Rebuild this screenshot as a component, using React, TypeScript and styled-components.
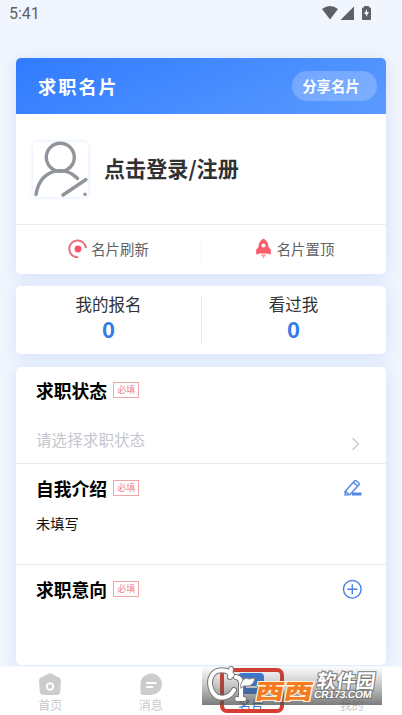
import React from "react";
import styled, { createGlobalStyle } from "styled-components";

const GlobalStyle = createGlobalStyle`
  * { box-sizing: border-box; }
  html, body { margin: 0; padding: 0; overflow: hidden; }
  body { font-family: "Noto Sans CJK SC", sans-serif; background: #f1f5fd; }
  svg { display: block; flex: none; overflow: visible; }
`;

const Screen = styled.div`
  position: relative;
  width: 402px;
  height: 715px;
  overflow: hidden;
  display: flex;
  flex-direction: column;
  background: #f1f5fd;
`;

const StatusBar = styled.header`
  height: 58px;
  flex: none;
  padding: 5px 30px 0 9px;
  display: flex;
  justify-content: space-between;
  color: #5f6064;
  font: 400 16px/18px Roboto, sans-serif;
`;

const Content = styled.main`
  height: 608px;
  flex: none;
  padding: 0 16px;
  display: flex;
  flex-direction: column;
`;

const Card = styled.section<{ $height: number; $gap: number }>`
  height: ${(p) => p.$height}px;
  margin-bottom: ${(p) => p.$gap}px;
  flex: none;
  background: #fff;
  border-radius: 5px;
  box-shadow: 0 2px 16px rgba(65, 130, 250, 0.17);
`;

const CardHeader = styled.div`
  height: 56px;
  padding: 0 9px 0 22px;
  display: flex;
  align-items: center;
  justify-content: space-between;
  border-radius: 5px 5px 0 0;
  background: linear-gradient(155deg, #307bff, #5b9bff);
  color: #fff;
`;

const HeaderTitle = styled.h1`
  margin: 0;
  font-size: 18.2px;
  line-height: 26px;
  font-weight: 700;
  letter-spacing: 2px;
`;

const ShareButton = styled.button`
  width: 85px;
  height: 30px;
  margin: 0;
  padding: 0 7px 1px 0;
  border: 0;
  border-radius: 15px;
  background: rgba(255, 255, 255, 0.22);
  color: #fff;
  font: 700 14.4px/28px "Noto Sans CJK SC", sans-serif;
`;

const Profile = styled.div`
  height: 110px;
  padding-left: 17px;
  display: flex;
  align-items: center;
`;

const Avatar = styled.div`
  width: 55px;
  height: 55px;
  border-radius: 4px;
  box-shadow: 0 0 4px #d9e6ff;
`;

const LoginText = styled.div`
  margin: 0 0 2px 16px;
  font-size: 21.1px;
  line-height: 30px;
  font-weight: 700;
  color: #303133;
`;

const Actions = styled.div`
  height: 50px;
  border-top: 1px solid #ececef;
  display: grid;
  grid-template-columns: 1fr 1fr;
`;

const Action = styled.div<{ $divided?: boolean }>`
  display: flex;
  align-items: center;
  justify-content: center;
  gap: ${(p) => (p.$divided ? "3px" : "5px")};
  padding: 0 0 1px ${(p) => (p.$divided ? "0" : "2px")};
  font-size: 14.4px;
  line-height: 22px;
  color: #606266;
  background: ${(p) => (p.$divided ? "linear-gradient(#fafafa, #fafafa) right 50% / 1px 27px no-repeat" : "none")};
`;

const Stats = styled.div`
  height: 100%;
  display: grid;
  grid-template-columns: 186px 1fr;
`;

const Stat = styled.div<{ $divided?: boolean }>`
  padding: 6px 1px 0 0;
  text-align: center;
  font-size: 16.5px;
  line-height: 24px;
  color: #303133;
  background: ${(p) => (p.$divided ? "linear-gradient(#e9ebf1, #e9ebf1) right 10px / 1px 48px no-repeat" : "none")};
`;

const StatValue = styled.div`
  color: #347be8;
  font-weight: 700;
  font-size: 22px;
  line-height: 24px;
`;

const Section = styled.div<{ $height: number; $line?: boolean }>`
  height: ${(p) => p.$height}px;
  padding: 10px 24px 0 20px;
  border-bottom: ${(p) => (p.$line ? "1px solid #e9ebf1" : "0")};
`;

const SectionHead = styled.div<{ $raised?: boolean }>`
  height: 28px;
  margin-top: ${(p) => (p.$raised ? "-1px" : "0")};
  display: flex;
  align-items: center;
`;

const SectionTitle = styled.h2`
  margin: 0 6px 0 0;
  font-size: 17.8px;
  line-height: 28px;
  font-weight: 700;
  color: #000;
`;

const Required = styled.span`
  width: 26px;
  height: 16px;
  border: 1px solid #f0a6a6;
  margin-right: auto;
  font-size: 9px;
  line-height: 13px;
  text-align: center;
  color: #ee8585;
`;

const SelectRow = styled.div`
  margin-top: 22px;
  height: 26px;
  display: flex;
  align-items: center;
  justify-content: space-between;
  font-size: 15.6px;
  color: #c4c7ce;

  svg { margin: 10px -2px 0 0; }
`;

const Note = styled.div`
  margin-top: 10px;
  font-size: 14.2px;
  line-height: 22px;
  color: #111;
`;

const NavBar = styled.nav`
  height: 49px;
  flex: none;
  display: grid;
  grid-template-columns: repeat(4, 1fr);
  background: #fff;
  border-top: 1px solid #f8f9fb;
`;

const NavItem = styled.div<{ $active?: boolean }>`
  display: flex;
  flex-direction: column;
  align-items: center;
  padding-top: 6px;
  font-size: ${(p) => (p.$active ? "13px" : "12px")};
  line-height: 17px;
  color: ${(p) => (p.$active ? "#3f78cf" : "#c8c8c8")};
`;

const Watermark = styled.div`
  position: absolute;
  left: 202px;
  top: 667px;
  width: 180px;
  height: 38px;
  display: flex;
  background: linear-gradient(rgba(80, 80, 80, 0.02), rgba(80, 80, 80, 0.3) 45%, rgba(80, 80, 80, 0.75));
`;

const ActiveFrame = styled.div`
  position: absolute;
  left: 220px;
  top: 668px;
  width: 64px;
  height: 45px;
  border: 4px solid #d83d32;
  border-radius: 7px;
`;

const BrandLogo = styled.svg`
  margin-left: 3px;
`;

const BrandMain = styled.div`
  margin: 11px 0 0 -3px;
  width: 57px;
  height: 24px;
  flex: none;
  font-size: 21px;
  line-height: 24px;
  font-weight: 900;
  white-space: nowrap;
  transform-origin: 0 50%;
  transform: scaleX(1.36) skewX(-8deg);
  color: #f47b20;
  -webkit-text-stroke: 2px #fff3df;
  paint-order: stroke fill;
`;

const BrandSide = styled.div`
  margin: 3px 0 0 3px;
  flex: none;
  transform: skewX(-8deg);
  white-space: nowrap;
  color: #fff;
  -webkit-text-stroke: 2px #777;
  paint-order: stroke fill;
`;

const BrandName = styled.div`
  font-size: 19.5px;
  line-height: 19px;
  font-weight: 700;
`;

const BrandSite = styled.div`
  margin: 0 0 0 -1px;
  font: 700 10.5px/11px "Liberation Sans", sans-serif;
  letter-spacing: -0.3px;
`;

const StatusIcons = () => (
  <svg width="51" height="22" viewBox="321 5 51 22" fill="#5f6064">
    <path d="M322 9Q330 3 338 9L330 19.500Z" />
    <path d="M354 6.500V20H340.500Z" />
    <path d="M364 6h5v1.500h1q1 0 1 1V19q0 1-1 1h-7q-1 0-1-1V8.500q0-1 1-1h1Z" />
    <path d="M367 9l-3 5h2v3l3-5h-2Z" fill="#f1f5fd" />
  </svg>
);

const PersonIcon = () => (
  <svg width="55" height="55" viewBox="0 0 55 55" fill="none" stroke="#919499" strokeWidth="3.400" strokeLinecap="round">
    <circle cx="27.300" cy="15.300" r="14" />
    <path d="M3 52.500C7 28 30 22 44.500 36.500M30 53 53 37.500" />
    <path d="M52 52.300h.1" />
  </svg>
);

const RefreshIcon = () => (
  <svg width="20" height="20" viewBox="0 0 20 20" fill="none">
    <path d="M10.200 18.300A8.400 8.400 0 1 1 18 9.200" stroke="#ed717d" strokeWidth="2" />
    <circle cx="10" cy="10" r="3.400" fill="#fa5365" />
  </svg>
);

const RocketIcon = () => (
  <svg width="17" height="22" viewBox="0 0 17 22" fill="#fb5d6c">
    <path d="M8.500.5C5 2.500 3.500 5.500 3.500 9L1.200 11.500V16.500L5 15.500h7l3.800 1v-5L13.500 9c0-3.500-1.500-6.500-5-8.500Z" />
    <circle cx="8.500" cy="7.500" r="2" fill="#fff" />
    <path d="M6 16.500h5l-1 2.300-.7-.5L8.500 21l-.8-2.700-.7.5Z" fill="#ff99a2" />
  </svg>
);

const ChevronIcon = () => (
  <svg width="15" height="14" viewBox="0 0 15 14" fill="none" stroke="#c0c4cc" strokeWidth="1.200">
    <path d="m3.500 1 6 6-6 6" />
  </svg>
);

const PencilIcon = () => (
  <svg width="18" height="18" viewBox="0 0 18 18" fill="none" stroke="#4f87e8" strokeWidth="1.400">
    <path d="M1 12.500 10.500 2q1-1 2 0l2.300 2q1 1 0 2L6 15.500l-4.800.5ZM9.500 3.500l4 3.500M1.500 12.300l3.300 3" />
    <path d="M8 15H17.500" strokeWidth="3" />
  </svg>
);

const PlusIcon = () => (
  <svg width="20" height="20" viewBox="0 0 20 20" fill="none" stroke="#4a83e4" strokeWidth="1.400">
    <circle cx="10.300" cy="10.300" r="8.800" />
    <path d="M5.300 10.300h10M10.300 5.300v10" />
  </svg>
);

const HomeIcon = () => (
  <svg width="24" height="23" viewBox="0 0 24 23" fill="#ccc">
    <path d="M10.500.700q1.500-.7 3 0l8 4q1.500 1 1.400 2.500L22.300 18q-.2 4-4 4H5.700q-3.800 0-4-4L1.100 7.200Q1 5.700 2.500 4.700Z" />
    <circle cx="12" cy="13.500" r="3.200" fill="none" stroke="#fff" strokeWidth="2" />
  </svg>
);

const MessageIcon = () => (
  <svg width="24" height="23" viewBox="0 0 24 23" fill="#ccc">
    <path d="M12.300.5A10.500 10.500 0 1 1 12 22H4q-2.500 0-2.500-2.500V11A10.500 10.500 0 0 1 12.300.5Z" />
    <path d="M8 10h9M8 14h5.500" stroke="#fff" strokeWidth="1.800" strokeLinecap="round" />
  </svg>
);

const CardIcon = () => (
  <svg width="26" height="23" viewBox="0 0 26 23">
    <rect x="0" y="0" width="26" height="21" rx="4" fill="#397ee3" />
    <path d="M8 14h11" stroke="#fff" strokeWidth="2" />
  </svg>
);

const MineIcon = () => (
  <svg width="24" height="23" viewBox="0 0 24 23" />
);

const SwirlLogo = () => (
  <BrandLogo width="54" height="38" viewBox="205 667 54 38" fill="none" strokeLinecap="round">
    <g stroke="#777" strokeWidth="6">
      <path d="M227 671C212 667 207 680 212 691C217 701 229 699 234 690M227 671q3 2 5 4M231 669l-1 8" />
      <path d="M236 677q6 1 5 8v14M237 699h7" />
    </g>
    <g stroke="#fff" strokeWidth="4">
      <path d="M227 671C212 667 207 680 212 691C217 701 229 699 234 690M227 671q3 2 5 4M231 669l-1 8" />
      <path d="M236 677q6 1 5 8v14M237 699h7" />
    </g>
    <path d="M241 684q3-8 8-5l6-1q-2 9-9 8-3-1-5 2Z" fill="#fff" stroke="#888" strokeWidth="1" />
  </BrandLogo>
);

export default function App() {
  return (
    <>
      <GlobalStyle />
      <Screen>
        <StatusBar>
          <span>5:41</span>
          <StatusIcons />
        </StatusBar>
        <Content>
          <Card $height={216} $gap={12}>
            <CardHeader>
              <HeaderTitle>求职名片</HeaderTitle>
              <ShareButton>分享名片</ShareButton>
            </CardHeader>
            <Profile>
              <Avatar><PersonIcon /></Avatar>
              <LoginText>点击登录/注册</LoginText>
            </Profile>
            <Actions>
              <Action $divided><RefreshIcon />名片刷新</Action>
              <Action><RocketIcon />名片置顶</Action>
            </Actions>
          </Card>
          <Card $height={68} $gap={13}>
            <Stats>
              <Stat $divided>我的报名<StatValue>0</StatValue></Stat>
              <Stat>看过我<StatValue>0</StatValue></Stat>
            </Stats>
          </Card>
          <Card $height={298} $gap={1}>
            <Section $height={97} $line>
              <SectionHead $raised><SectionTitle>求职状态</SectionTitle><Required>必填</Required></SectionHead>
              <SelectRow>请选择求职状态<ChevronIcon /></SelectRow>
            </Section>
            <Section $height={101} $line>
              <SectionHead><SectionTitle>自我介绍</SectionTitle><Required>必填</Required><PencilIcon /></SectionHead>
              <Note>未填写</Note>
            </Section>
            <Section $height={100}>
              <SectionHead><SectionTitle>求职意向</SectionTitle><Required>必填</Required><PlusIcon /></SectionHead>
            </Section>
          </Card>
        </Content>
        <NavBar>
          <NavItem><HomeIcon />首页</NavItem>
          <NavItem><MessageIcon />消息</NavItem>
          <NavItem $active><CardIcon />名片</NavItem>
          <NavItem><MineIcon />我的</NavItem>
        </NavBar>
        <ActiveFrame />
        <Watermark>
          <SwirlLogo />
          <BrandMain>西西</BrandMain>
          <BrandSide>
            <BrandName>软件园</BrandName>
            <BrandSite>CR173.COM</BrandSite>
          </BrandSide>
        </Watermark>
      </Screen>
    </>
  );
}
